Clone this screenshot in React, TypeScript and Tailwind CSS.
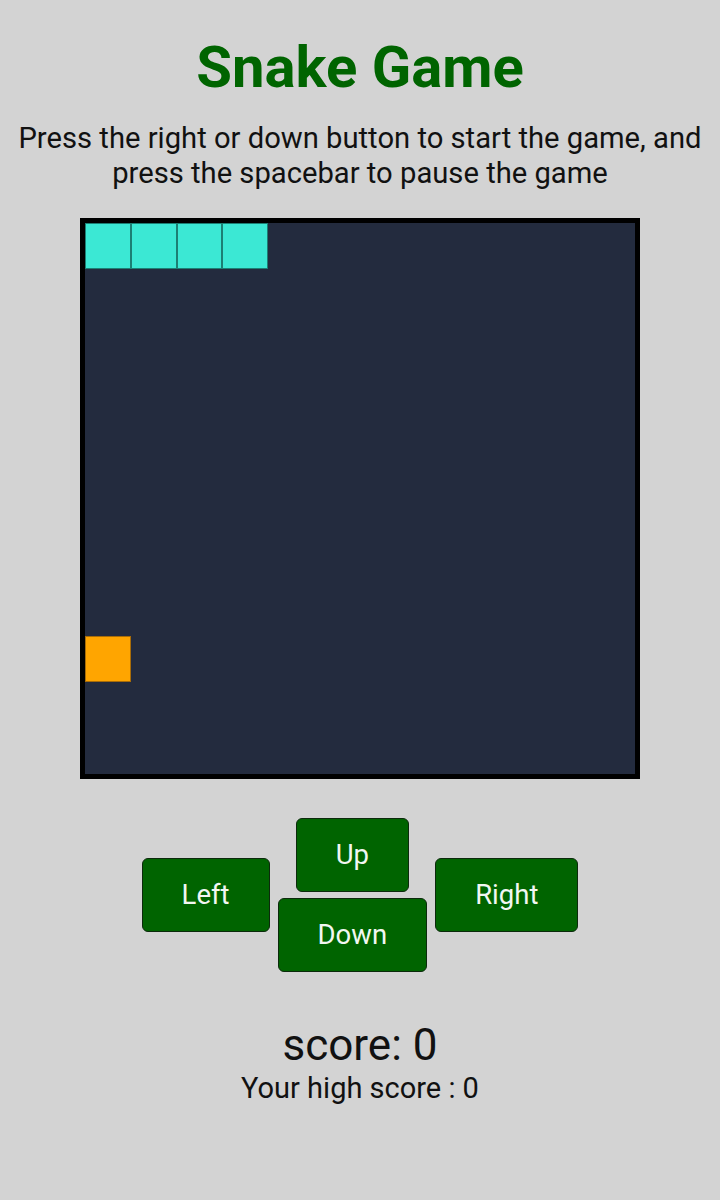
import React from 'react'

const SIZE = 12
const snake = [
  [0, 0],
  [1, 0],
  [2, 0],
  [3, 0],
]
const food = [0, 9]

function Board() {
  const cells = []
  for (let y = 0; y < SIZE; y++) {
    for (let x = 0; x < SIZE; x++) {
      const isSnake = snake.some(([sx, sy]) => sx === x && sy === y)
      const isFood = food[0] === x && food[1] === y
      let cls = ''
      if (isSnake) cls = 'bg-[#3be8d4] border border-[#1c7f74]'
      else if (isFood) cls = 'bg-[#ffa500] border border-[#a86c08]'
      cells.push(<div key={`${x}-${y}`} className={cls} />)
    }
  }
  return (
    <div className="w-[560px] h-[561px] border-[5px] border-black bg-[#232b3e] grid grid-cols-12 grid-rows-12">
      {cells}
    </div>
  )
}

function Btn({ label }: { label: string }) {
  return (
    <button className="h-[74px] px-[39px] rounded-md border border-[#0c2a0c] bg-[#006400] text-[#f2f7f2] text-[27.5px] leading-none">
      {label}
    </button>
  )
}

export default function App() {
  return (
    <div
      className="min-h-[1200px] bg-[#d3d3d3] flex flex-col items-center text-[#111]"
      style={{ fontFamily: 'Roboto, "Noto Sans", sans-serif' }}
    >
      <h1 className="mt-[35px] text-[58px] leading-[64px] font-bold text-[#006400]">Snake Game</h1>
      <p className="mt-[22px] px-2 text-center text-[29.2px] leading-[35px]">
        Press the right or down button to start the game, and press the spacebar to pause the game
      </p>

      <div className="mt-[27px]">
        <Board />
      </div>

      {/* Controls */}
      <div className="mt-[39px] flex items-center gap-2">
        <Btn label="Left" />
        <div className="flex flex-col items-center gap-[6px]">
          <Btn label="Up" />
          <Btn label="Down" />
        </div>
        <Btn label="Right" />
      </div>

      <div className="mt-[47px] text-[44px] leading-[52px]">score: 0</div>
      <div className="text-[29px] leading-[34px]">Your high score : 0</div>
    </div>
  )
}
